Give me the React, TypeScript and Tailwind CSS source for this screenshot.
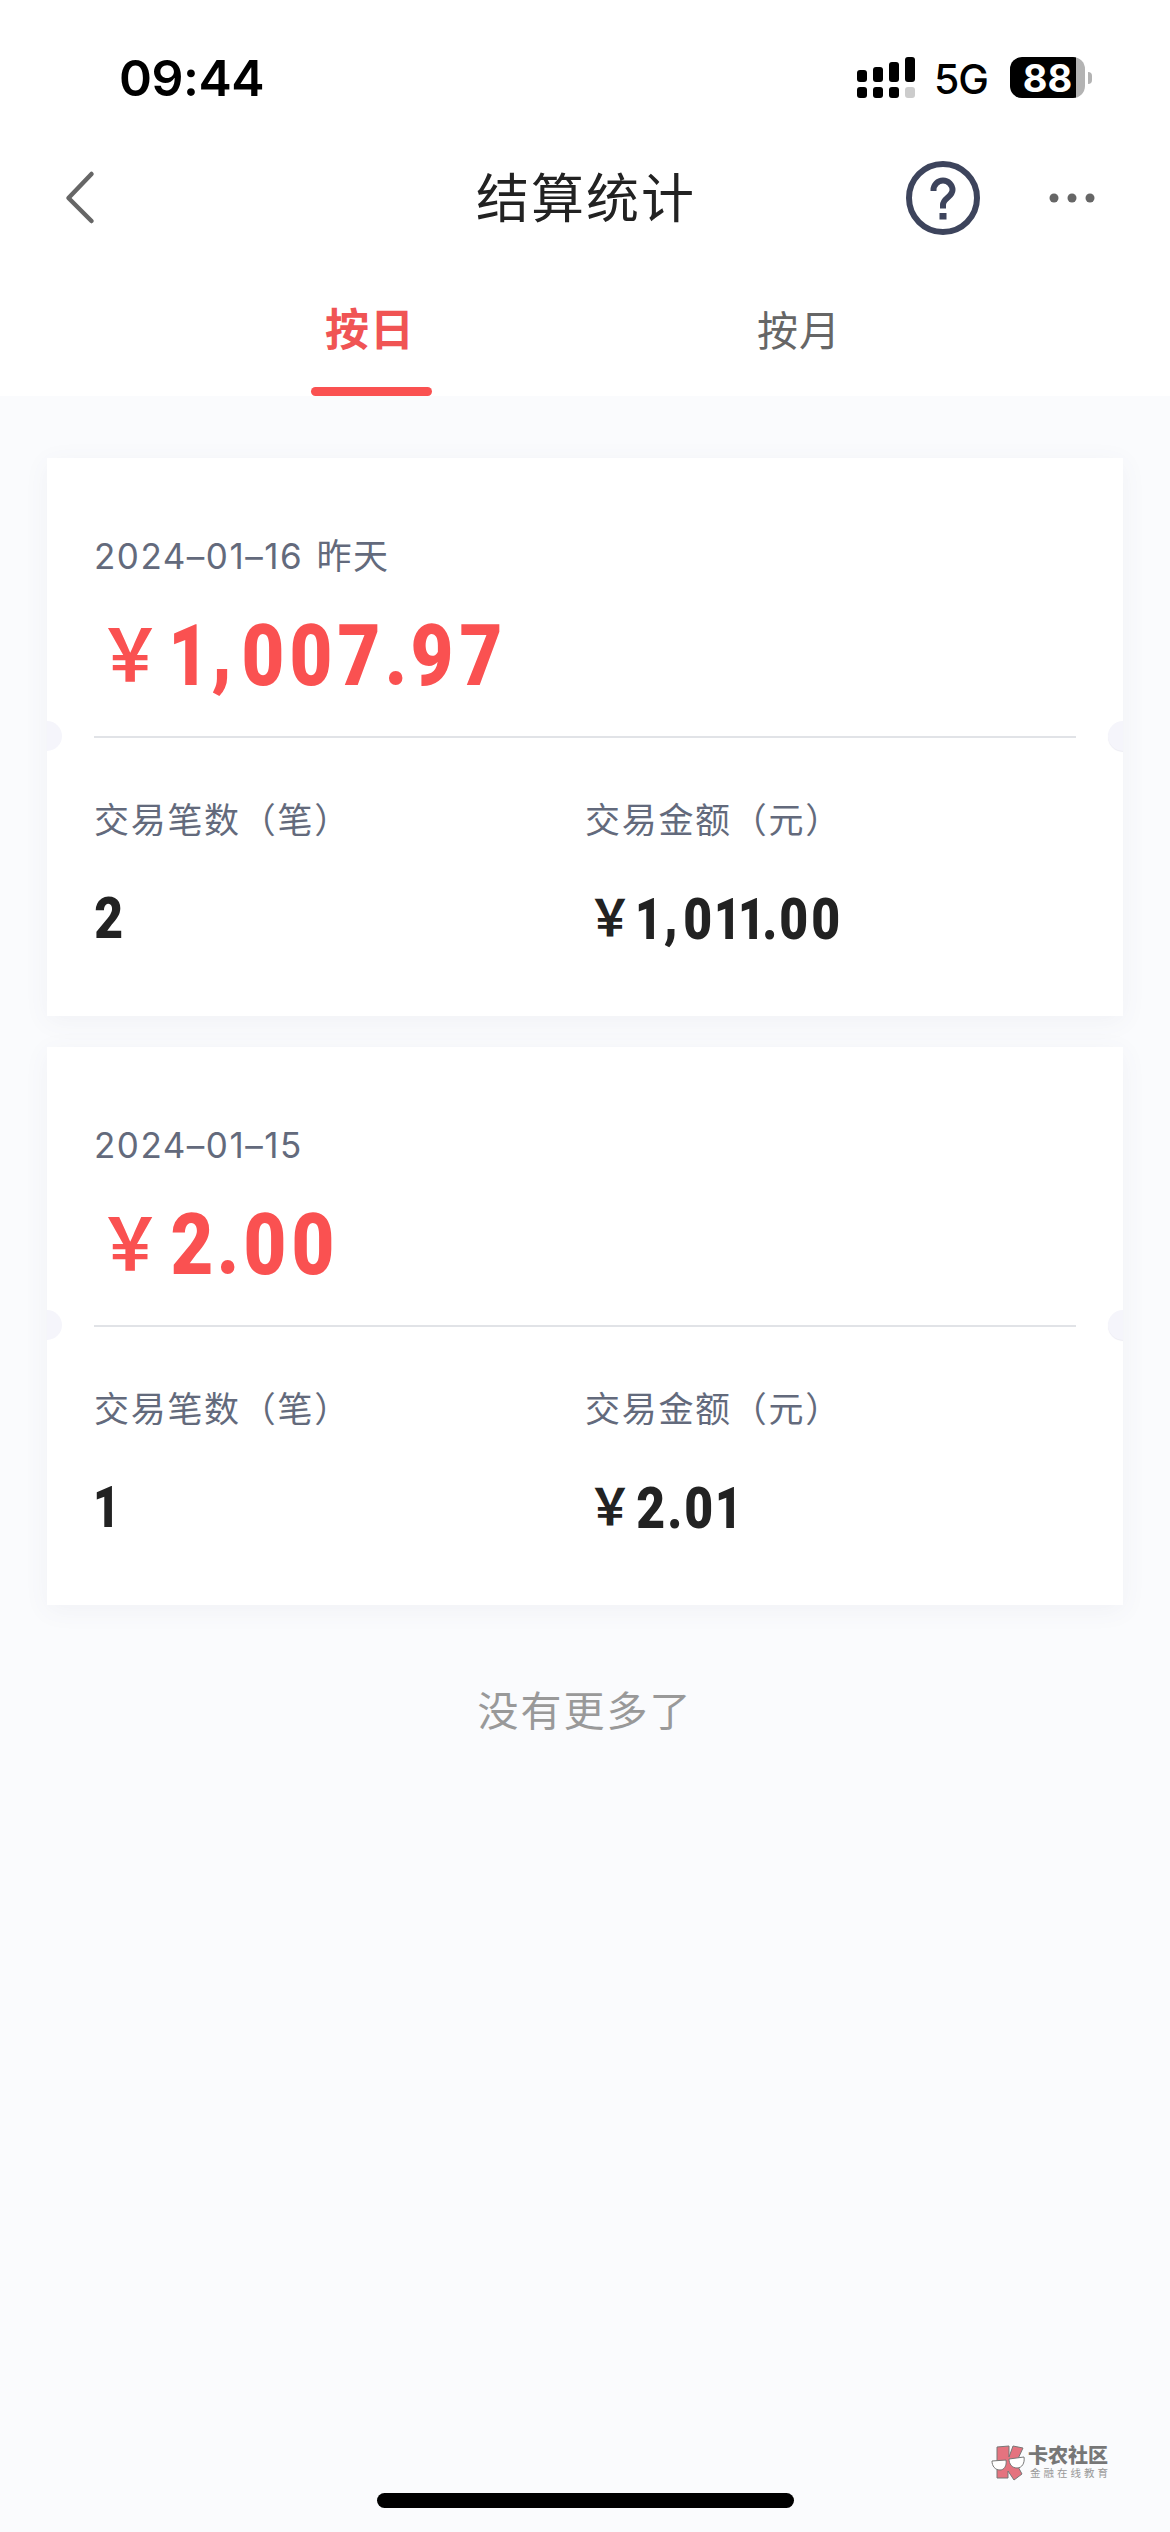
const records = [
  { date: "2024–01–16 昨天", settled: "1,007.97", count: "2", amount: "1,011.00" },
  { date: "2024–01–15", settled: "2.00", count: "1", amount: "2.01" },
]

// Narrow DIN-like digits: every character sits in its own cell
const cellWidths: Record<string, string> = {
  "1": "w-[0.42em]",
  ",": "w-[0.38em]",
  ".": "w-[0.28em]",
}

const glyphStyles: Record<string, string> = {
  "1": "translate-x-[0.03em] scale-x-80",
  ",": "-translate-y-[0.06em] scale-x-90",
}

function Digits({ value, className = "" }: { value: string; className?: string }) {
  return (
    <span className={`-ml-[1px] inline-flex font-black ${className}`}>
      {value.split("").map((char, i) => (
        <span key={i} className={`flex justify-center ${cellWidths[char] ?? "w-[0.55em]"}`}>
          <span className={glyphStyles[char] ?? "scale-x-[0.86]"}>{char}</span>
        </span>
      ))}
    </span>
  )
}

function StatusBar() {
  return (
    <div className="flex h-[156px] items-start justify-between pl-[119px] pr-[78px]">
      <span className="mt-[48px] font-['Inter',sans-serif] text-[50px] leading-[60px] font-semibold tracking-[-0.5px] text-black">
        09:44
      </span>
      <div className="mt-[57px] flex h-[41px] items-center">
        <svg width="58" height="41" viewBox="0 0 58 41">
          <rect x="0" y="13" width="10" height="12" rx="3" />
          <rect x="16" y="10" width="10" height="15" rx="3" />
          <rect x="32" y="5" width="10" height="20" rx="3" />
          <rect x="48" y="0" width="10" height="25" rx="3" />
          <rect x="0" y="30" width="10" height="11" rx="3" />
          <rect x="16" y="30" width="10" height="11" rx="3" />
          <rect x="32" y="30" width="10" height="11" rx="3" />
          <rect x="48" y="30" width="10" height="11" rx="3" fill="#cccccc" />
        </svg>
        <span className="mt-[3px] ml-[19px] w-[76px] font-['Inter',sans-serif] text-[41px] leading-[41px] font-medium tracking-[-1px] text-black">
          5G
        </span>
        <div className="flex h-[41px] w-[75px] items-center justify-center rounded-[12px] bg-linear-to-r from-black from-88% to-[#b3b3b3] to-88% font-['Inter',sans-serif] text-[38px] leading-[48px] font-bold text-white">
          88
        </div>
        <div className="ml-[3px] h-[12px] w-[4px] rounded-r-full bg-[#b3b3b3]" />
      </div>
    </div>
  )
}

function NavBar() {
  return (
    <div className="flex h-[84px] items-center justify-between pl-[63px] pr-[74px]">
      <svg className="w-[190px]" height="60" viewBox="0 0 190 60" fill="none">
        <path d="M28.500 6 L5.500 30 L28.500 53" stroke="#666666" strokeWidth="4.500" strokeLinecap="round" strokeLinejoin="round" />
      </svg>
      <h1 className="mt-[2px] ml-[223px] flex-1 text-[53px] leading-[60px] tracking-[2px] text-[#222222]">结算统计</h1>
      <svg width="74" height="74" viewBox="0 0 74 74" fill="none" stroke="#3d445c" strokeWidth="6">
        <circle cx="37" cy="37" r="34" />
        <path d="M27.500 30 V29 a9.500 9.500 0 0 1 19 0 c0 7 -9.500 8 -9.500 15 v3.500" />
        <rect x="33.500" y="52" width="7" height="6.500" fill="#3d445c" stroke="none" />
      </svg>
      <svg className="ml-[68px]" width="48" height="12" viewBox="0 0 48 12" fill="#666666">
        <circle cx="6" cy="6" r="4.500" />
        <circle cx="24" cy="6" r="4.500" />
        <circle cx="42" cy="6" r="4.500" />
      </svg>
    </div>
  )
}

function Tabs() {
  return (
    <div className="flex h-[156px] justify-center gap-[307px]">
      <button className="flex w-[121px] flex-col items-center justify-between">
        <span className="mt-[60px] mr-[2px] text-[44px] leading-[60px] font-bold tracking-[1px] whitespace-nowrap text-[#f05454]">
          按日
        </span>
        <span className="h-[9px] w-full rounded-full bg-[#fa5151]" />
      </button>
      <button className="flex w-[121px] flex-col items-center">
        <span className="mt-[61px] text-[41px] leading-[60px] tracking-[1px] whitespace-nowrap text-[#666666]">按月</span>
      </button>
    </div>
  )
}

function RecordCard({ record }: { record: (typeof records)[number] }) {
  return (
    <div className="h-[558px] bg-white shadow-[0_5px_24px_rgba(90,80,120,0.06)]">
      <div className="relative h-full overflow-hidden px-[47px]">
        <div className="h-[278px] pt-[73px]">
          <p className="text-[35px] leading-[50px] tracking-[1.5px] text-[#636a7c] [word-spacing:2px]">{record.date}</p>
          <p className="mt-[27px] flex items-center font-['Roboto','Noto_Sans_CJK_SC',sans-serif] text-[86px] leading-[94px] font-bold text-[#fa5151]">
            <span className="mt-[2px] w-[75px] scale-x-90 text-[72px]">￥</span>
            <Digits value={record.settled} className="gap-[1px]" />
          </p>
        </div>
        <div className="h-[2px] bg-[#e1e3e7]" />
        <div className="absolute top-[263px] -left-[15px] h-[30px] w-[30px] rounded-full bg-[#f5f5fb]" />
        <div className="absolute top-[263px] -right-[15px] h-[30px] w-[30px] rounded-full bg-[#f5f5fb] shadow-[0_1px_1px_#ececf3]" />
        <div className="grid grid-cols-2 pt-[57px]">
          <div>
            <p className="text-[35px] leading-[50px] tracking-[1.7px] text-[#636a7c]">交易笔数（笔）</p>
            <p className="mt-[39px] font-['Roboto',sans-serif] text-[58px] leading-[68px] font-bold text-[#222222]">
              <Digits value={record.count} />
            </p>
          </div>
          <div>
            <p className="text-[35px] leading-[50px] tracking-[1.7px] text-[#636a7c]">交易金额（元）</p>
            <p className="mt-[39px] flex items-center font-['Roboto','Noto_Sans_CJK_SC',sans-serif] text-[58px] leading-[68px] font-bold text-[#222222]">
              <span className="mt-[1px] w-[51px] scale-x-90 text-[50px]">￥</span>
              <Digits value={record.amount} />
            </p>
          </div>
        </div>
      </div>
    </div>
  )
}

function CommunityLogo() {
  return (
    <div className="flex items-center">
      <svg width="35" height="36" viewBox="0 0 35 36" stroke="#777777" strokeWidth="1" strokeLinejoin="round">
        <path d="M6 2 L18 1 L18 12 L22 1 L32 3 L25 18 L31 29 L23 35 L17 26 L17 33 L6 33 Z" fill="#e4737f" />
        <path d="M1 16 L15 15 C16 21 13 25 9 25 C4 25 1 21 1 16 Z" fill="#ffffff" />
        <path d="M18 14 L33 12 C34 18 31 23 26 23 C21 23 18 19 18 14 Z" fill="#ffffff" />
      </svg>
      <div className="ml-[2px] whitespace-nowrap">
        <p className="text-[20px] leading-[20px] font-black text-[#777777]">卡农社区</p>
        <p className="mt-[2px] ml-[2px] text-[10.500px] leading-[12px] tracking-[3px] text-[#999999]">金融在线教育</p>
      </div>
    </div>
  )
}

export default function App() {
  return (
    <div className="flex h-[2532px] w-[1170px] flex-col overflow-hidden bg-[#fafbfd] font-['Inter','Noto_Sans_CJK_SC',sans-serif]">
      <header className="bg-white">
        <StatusBar />
        <NavBar />
        <Tabs />
      </header>
      <main className="flex flex-1 flex-col gap-[31px] px-[47px] pt-[62px]">
        {records.map((record) => (
          <RecordCard key={record.date} record={record} />
        ))}
        <p className="mt-[45px] text-center text-[41px] leading-[60px] tracking-[2px] text-[#999999]">没有更多了</p>
      </main>
      <footer className="flex flex-col">
        <div className="mr-[59px] self-end">
          <CommunityLogo />
        </div>
        <div className="mt-[12px] mb-[24px] h-[15px] w-[417px] self-center rounded-full bg-black" />
      </footer>
    </div>
  )
}
